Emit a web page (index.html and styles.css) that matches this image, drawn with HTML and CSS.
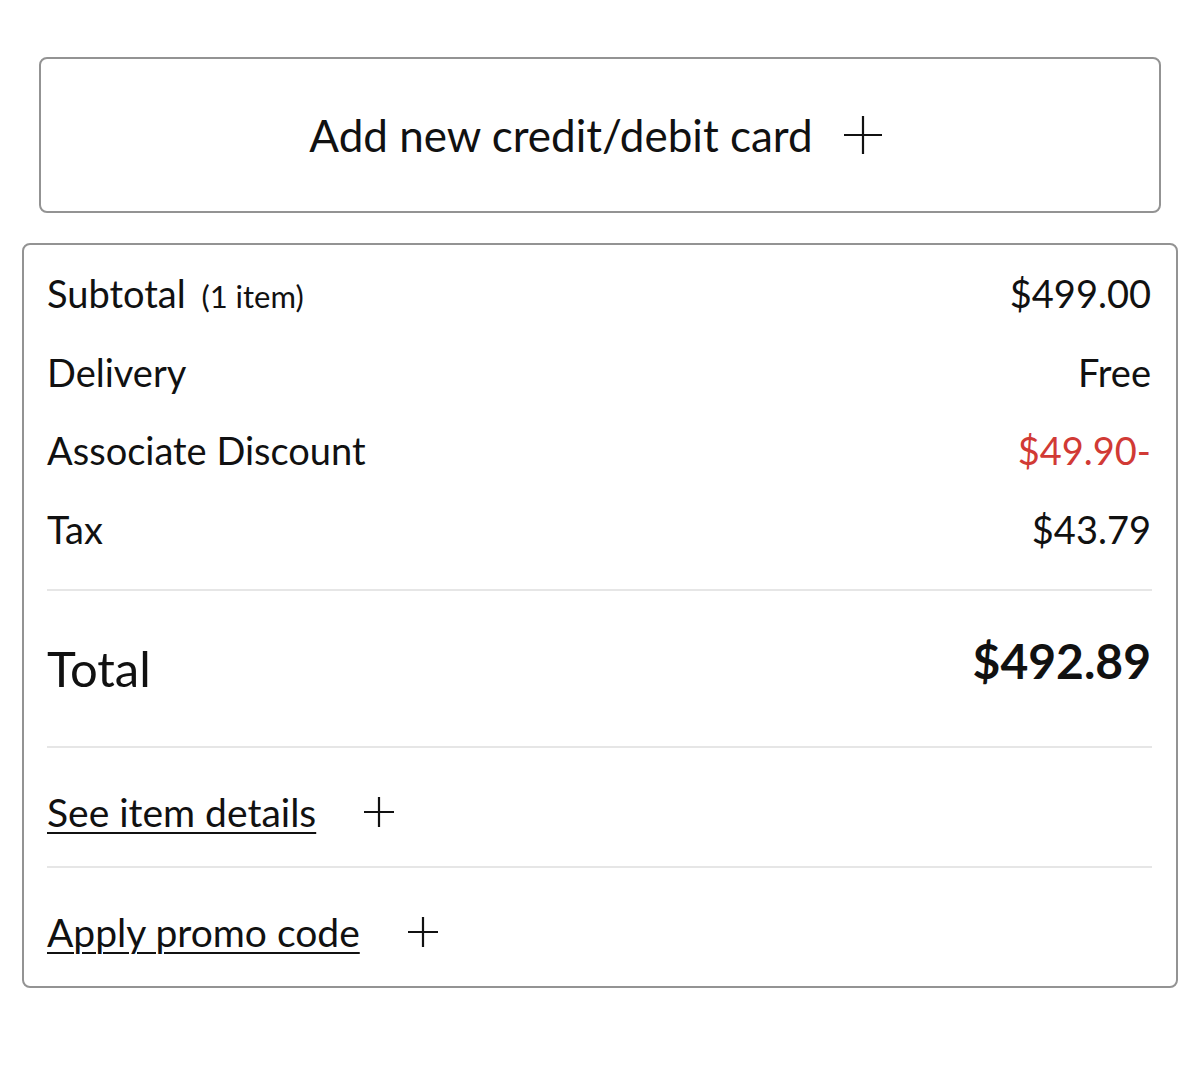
FILE: index.html
```html
<!DOCTYPE html>
<html lang="en">
<head>
<meta charset="utf-8">
<title>Checkout summary</title>
<link rel="stylesheet" href="styles.css">
</head>
<body>
<main class="page">
  <button class="add-card" type="button">
    <span>Add new credit/debit card</span>
    <svg class="plus plus-lg" viewBox="0 0 40 40" aria-hidden="true"><path d="M20 1v38M1 20h38"/></svg>
  </button>

  <section class="summary">
    <div class="lines">
      <div class="row"><span class="label">Subtotal <small>(1 item)</small></span><span class="value">$499.00</span></div>
      <div class="row"><span class="label">Delivery</span><span class="value">Free</span></div>
      <div class="row"><span class="label">Associate Discount</span><span class="value discount">$49.90-</span></div>
      <div class="row"><span class="label">Tax</span><span class="value">$43.79</span></div>
    </div>
    <div class="total">
      <span class="total-label">Total</span>
      <span class="total-value">$492.89</span>
    </div>
    <div class="link-row">
      <a class="link" href="#">See item details</a>
      <svg class="plus" viewBox="0 0 32 32" aria-hidden="true"><path d="M16 1v30M1 16h30"/></svg>
    </div>
    <div class="link-row last">
      <a class="link" href="#">Apply promo code</a>
      <svg class="plus" viewBox="0 0 32 32" aria-hidden="true"><path d="M16 1v30M1 16h30"/></svg>
    </div>
  </section>
</main>
</body>
</html>
```
FILE: styles.css
```css
* { box-sizing: border-box; }
html, body { margin: 0; padding: 0; background: #fff; }
body {
  font-family: Lato, "Open Sans", "Liberation Sans", sans-serif;
  color: #111;
}
.page {
  padding-top: 57px;
  width: 1200px;
}
.add-card {
  display: flex;
  align-items: center;
  justify-content: center;
  gap: 30px;
  margin-left: 39px;
  width: 1122px;
  height: 156px;
  background: #fff;
  border: 2px solid #939393;
  border-radius: 8px;
  font-family: inherit;
  font-size: 44px;
  color: #111;
  padding: 0 8px 0 0;
}
.plus { width: 32px; height: 32px; stroke: #111; stroke-width: 2.2; fill: none; flex: none; }
.plus-lg { width: 40px; height: 40px; }

.summary {
  margin: 30px 0 0 22px;
  width: 1156px;
  height: 745px;
  border: 2px solid #939393;
  border-radius: 8px;
  padding: 9px 24px 0 23px;
}
.lines { padding-bottom: 21px; border-bottom: 2px solid #e6e6e6; }
.row {
  display: flex;
  justify-content: space-between;
  align-items: center;
  height: 78.5px;
  font-size: 38px;
  padding-right: 1px;
}
.row small { font-size: 31px; margin-left: 6px; }
.discount { color: #d13a35; }
.total {
  display: flex;
  justify-content: space-between;
  align-items: center;
  height: 157px;
  border-bottom: 2px solid #e6e6e6;
  padding-right: 1px;
}
.total-label { font-size: 49px; padding-bottom: 2px; }
.total-value { font-size: 48px; font-weight: 700; margin-bottom: 16px; }
.link-row {
  display: flex;
  align-items: center;
  gap: 47px;
  height: 120px;
  border-bottom: 2px solid #e6e6e6;
  padding-top: 10px;
}
.link-row.last { border-bottom: none; height: 118px; }
.link {
  font-size: 39px;
  color: #111;
  text-decoration: underline;
  text-decoration-thickness: 2px;
  text-underline-offset: 5px;
}
```
